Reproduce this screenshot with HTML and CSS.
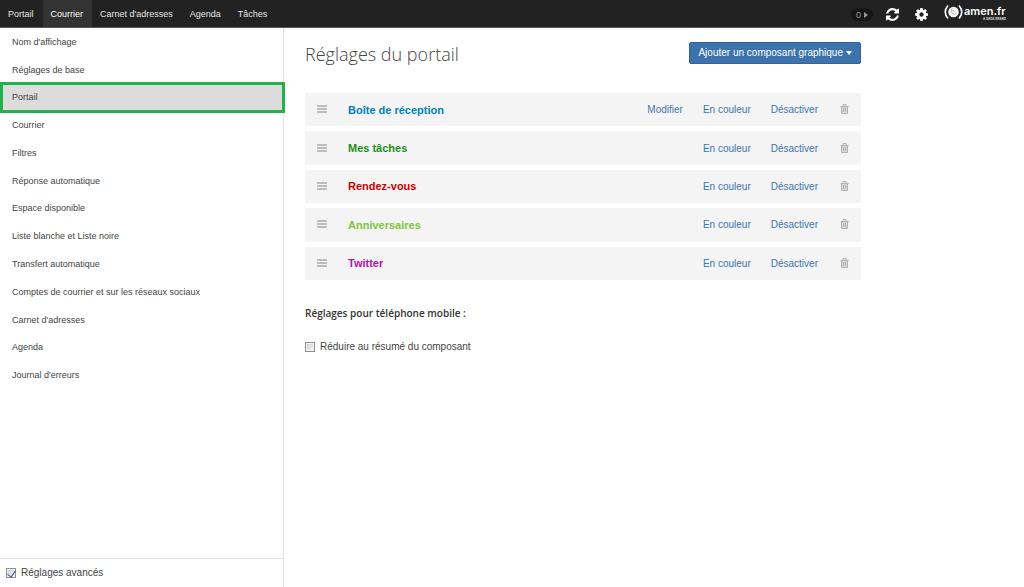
FILE: index.html
```html
<!DOCTYPE html>
<html lang="fr">
<head>
<meta charset="utf-8">
<meta name="viewport" content="width=device-width, initial-scale=1">
<title>Réglages du portail</title>
<link rel="stylesheet" href="styles.css">
</head>
<body>
<svg class="sprite" aria-hidden="true">
  <symbol id="trash" viewBox="0 0 9 10"><path fill="currentColor" fill-opacity=".35" d="M1.500 3h6v6.500h-6z"/><path fill="none" stroke="currentColor" stroke-width=".9" d="M.5 2.500h8M3 2V.5h3V2M1.500 3v6.500h6V3M3.500 4v4M5.500 4v4"/></symbol>
  <symbol id="grip" viewBox="0 0 10 8"><path fill="none" stroke="currentColor" stroke-width="1.3" d="M0 1h10M0 4h10M0 7h10"/></symbol>
</svg>
<header class="topbar">
  <nav class="tabs" aria-label="Applications">
    <a class="tab" href="#">Portail</a>
    <a class="tab tab-active" href="#">Courrier</a>
    <a class="tab" href="#">Carnet d'adresses</a>
    <a class="tab" href="#">Agenda</a>
    <a class="tab" href="#">Tâches</a>
  </nav>
  <div class="tools">
    <button class="counter" type="button">0<svg width="4" height="6" viewBox="0 0 4 6"><path fill="currentColor" d="M0 0l4 3-4 3z"/></svg></button>
    <button class="tool" type="button" aria-label="Actualiser"><svg width="13" height="13" viewBox="0 0 1536 1536"><path fill="currentColor" d="M1511 928q0 5-1 7-64 268-268 434.500T764 1536q-146 0-282.500-55T238 1324l-129 129q-19 19-45 19t-45-19-19-45V960q0-26 19-45t45-19h448q26 0 45 19t19 45-19 45l-137 137q71 66 161 102t187 36q134 0 250-65t186-179q11-17 53-117 8-23 30-23h192q13 0 22.500 9.500t9.500 22.500zm25-800v448q0 26-19 45t-45 19h-448q-26 0-45-19t-19-45 19-45l138-138Q969 256 768 256q-134 0-250 65T332 500q-11 17-53 117-8 23-30 23H50q-13 0-22.500-9.500T18 608v-7q65-268 270-434.500T768 0q146 0 284 55.500T1297 212l130-129q19-19 45-19t45 19 19 45z"/></svg></button>
    <button class="tool" type="button" aria-label="Réglages"><svg width="13" height="13" viewBox="0 0 1536 1536"><path fill="currentColor" fill-rule="evenodd" d="M1024 768q0-106-75-181t-181-75-181 75-75 181 75 181 181 75 181-75 75-181zm512-109v222q0 12-8 23t-20 13l-185 28q-19 54-39 91 35 50 107 138 10 12 10 25t-9 23q-27 37-99 108t-94 71q-12 0-26-9l-138-108q-44 23-91 38-16 136-29 186-7 28-36 28H657q-14 0-24.500-8.500T621 1506l-28-184q-49-16-90-37l-141 107q-10 9-25 9-14 0-25-11-126-114-165-168-7-10-7-23 0-12 8-23 15-21 51-66.500t54-70.500q-27-50-41-99L29 913q-13-2-21-12.500T0 877V655q0-12 8-23t19-13l186-28q14-46 39-92-40-57-107-138-10-12-10-24 0-10 9-23 26-36 98.500-107.500T337 135q13 0 26 10l138 107q44-23 91-38 16-136 29-186 7-28 36-28h222q14 0 24.500 8.500T915 30l28 184q49 16 90 37l142-107q9-9 24-9 13 0 25 10 129 119 165 170 7 8 7 22 0 12-8 23-15 21-51 66.500t-54 70.500q26 50 41 98l183 28q13 2 21 12.500t8 23.500z"/></svg></button>
    <svg class="logo" width="64" height="21" viewBox="0 0 64 21" role="img" aria-label="amen.fr">
      <g fill="none" stroke="#fff" stroke-width="1.6"><path d="M4 3.500Q-1.500 10 4 16.500M15 3.500Q20.500 10 15 16.500"/></g>
      <circle cx="9.500" cy="10" r="5.300" fill="#f2f2f2"/><path fill="none" stroke="#aaa" stroke-width=".8" d="M8 6.500q-2 3 .5 5 1.500 1.500 3.500 0M8.500 8l1.500 2"/>
      <text class="logo-name" x="20" y="13">amen.fr</text>
      <text class="logo-tag" x="39" y="18">A DADA BRAND</text>
    </svg>
  </div>
</header>
<div class="layout">
  <aside class="sidebar">
    <nav class="menu" aria-label="Réglages">
      <a class="item" href="#">Nom d'affichage</a>
      <a class="item" href="#">Réglages de base</a>
      <a class="item item-active" href="#">Portail</a>
      <a class="item" href="#">Courrier</a>
      <a class="item" href="#">Filtres</a>
      <a class="item" href="#">Réponse automatique</a>
      <a class="item" href="#">Espace disponible</a>
      <a class="item" href="#">Liste blanche et Liste noire</a>
      <a class="item" href="#">Transfert automatique</a>
      <a class="item" href="#">Comptes de courrier et sur les réseaux sociaux</a>
      <a class="item" href="#">Carnet d'adresses</a>
      <a class="item" href="#">Agenda</a>
      <a class="item" href="#">Journal d'erreurs</a>
    </nav>
    <label class="check advanced"><input class="box" type="checkbox" checked>Réglages avancés</label>
  </aside>
  <main class="content">
    <div class="heading">
      <h1 class="title">Réglages du portail</h1>
      <button class="add" type="button">Ajouter un composant graphique<span class="caret"></span></button>
    </div>
    <ul class="widgets">
      <li class="widget"><svg class="grip"><use href="#grip"/></svg><strong class="name blue">Boîte de réception</strong><a class="action" href="#">Modifier</a><a class="action" href="#">En couleur</a><a class="action" href="#">Désactiver</a><button class="delete" type="button" aria-label="Supprimer"><svg class="trash"><use href="#trash"/></svg></button></li>
      <li class="widget"><svg class="grip"><use href="#grip"/></svg><strong class="name green">Mes tâches</strong><a class="action" href="#">En couleur</a><a class="action" href="#">Désactiver</a><button class="delete" type="button" aria-label="Supprimer"><svg class="trash"><use href="#trash"/></svg></button></li>
      <li class="widget"><svg class="grip"><use href="#grip"/></svg><strong class="name red">Rendez-vous</strong><a class="action" href="#">En couleur</a><a class="action" href="#">Désactiver</a><button class="delete" type="button" aria-label="Supprimer"><svg class="trash"><use href="#trash"/></svg></button></li>
      <li class="widget"><svg class="grip"><use href="#grip"/></svg><strong class="name lime">Anniversaires</strong><a class="action" href="#">En couleur</a><a class="action" href="#">Désactiver</a><button class="delete" type="button" aria-label="Supprimer"><svg class="trash"><use href="#trash"/></svg></button></li>
      <li class="widget"><svg class="grip"><use href="#grip"/></svg><strong class="name purple">Twitter</strong><a class="action" href="#">En couleur</a><a class="action" href="#">Désactiver</a><button class="delete" type="button" aria-label="Supprimer"><svg class="trash"><use href="#trash"/></svg></button></li>
    </ul>
    <h2 class="subtitle">Réglages pour téléphone mobile :</h2>
    <label class="check"><input class="box" type="checkbox">Réduire au résumé du composant</label>
  </main>
</div>
</body>
</html>
```
FILE: styles.css
```css
* { box-sizing: border-box; }
body {
  margin: 0;
  min-height: 100vh;
  display: flex;
  flex-direction: column;
  background: #fff;
  color: #444;
  font: 10px/16px "Liberation Sans", Arial, sans-serif;
}
a { color: inherit; text-decoration: none; }
button { border: 0; padding: 0; background: none; color: inherit; font: inherit; cursor: pointer; }
.sprite { position: absolute; width: 0; height: 0; }

.topbar {
  display: flex;
  justify-content: space-between;
  height: 28px;
  background: #222;
  border-bottom: 1px solid #555;
  color: #e4e4e4;
}
.tabs { display: flex; font-size: 9px; }
.tab { padding: 1px 9px 0 8px; line-height: 26px; white-space: nowrap; }
.tab-active { background: #333; color: #fff; }
.tools { display: flex; align-items: center; gap: 16px; padding: 2px 16px 0 0; }
.counter {
  display: flex;
  align-items: center;
  justify-content: center;
  gap: 3px;
  width: 22px;
  height: 13px;
  margin-right: -3px;
  border-radius: 7px;
  background: #161616;
  color: #999;
  font-size: 9px;
}
.tool { display: flex; color: #fff; }
.logo { align-self: flex-start; }
.logo-name { font: 600 11px Inter, sans-serif; fill: #fff; }
.logo-tag { font: 700 3px Inter, sans-serif; fill: #ddd; }

.layout { flex: 1; display: grid; grid-template-columns: 284px 1fr; }
.sidebar { display: flex; flex-direction: column; border-right: 1px solid #e2e2e2; }
.menu { display: grid; grid-auto-rows: 1fr; min-height: 361px; font-size: 9px; }
.item { display: flex; align-items: center; padding: 0 12px; }
.item-active { position: relative; background: #dcdcdc; }
.item-active::after { content: ""; position: absolute; inset: -2px -2px -2px 0; border: 3px solid #22b14c; }
.check { display: flex; align-items: center; gap: 5px; }
.advanced { margin-top: auto; padding: 6px; border-top: 1px solid #e2e2e2; }
.box {
  appearance: none;
  flex: none;
  width: 10px;
  height: 10px;
  margin: 0;
  border: 1px solid #8e8f8f;
  background: linear-gradient(135deg, #ccc, #f6f6f6);
  box-shadow: inset 0 0 0 1px #f4f4f4;
}
.box:checked::after {
  content: "";
  display: block;
  width: 4px;
  height: 7px;
  margin: 0 auto;
  border: solid #3c5599;
  border-width: 0 1px 1px 0;
  transform: rotate(35deg);
}

.content { max-width: 577px; padding: 14px 0 14px 21px; }
.heading { display: flex; align-items: flex-start; justify-content: space-between; }
.title { margin: 0; font: 300 18px/24px "Open Sans", sans-serif; color: #444; }
.add {
  display: flex;
  align-items: center;
  justify-content: center;
  gap: 3px;
  height: 22px;
  padding: 0 8px;
  border: 1px solid #33639a;
  border-radius: 2px;
  background: #3c73ad;
  color: #fff;
}
.caret { border: 4px solid transparent; border-width: 4px 3px 0; border-top-color: #fff; }
.widgets {
  display: grid;
  grid-auto-rows: 1fr;
  gap: 5px;
  min-height: 187px;
  margin: 27px 0 24px;
  padding: 0;
  list-style: none;
}
.widget { display: flex; align-items: center; gap: 20px; padding: 0 12px; background: #f4f4f4; }
.grip { width: 10px; height: 8px; margin-bottom: 1px; color: #aaa; }
.name { flex: 1; padding-left: 1px; font-size: 11px; }
.blue { color: #0080bc; }
.green { color: #1c8e1c; }
.red { color: #cb0000; }
.lime { color: #82c341; }
.purple { color: #b70fb0; }
.action { padding-top: 1px; color: #4076b0; }
.delete { display: flex; margin: 0 0 1px 2px; color: #aaa; }
.trash { width: 9px; height: 10px; }
.subtitle { margin: 0 0 17px; font: 600 10px/18px "Open Sans", sans-serif; color: #333; }
```
